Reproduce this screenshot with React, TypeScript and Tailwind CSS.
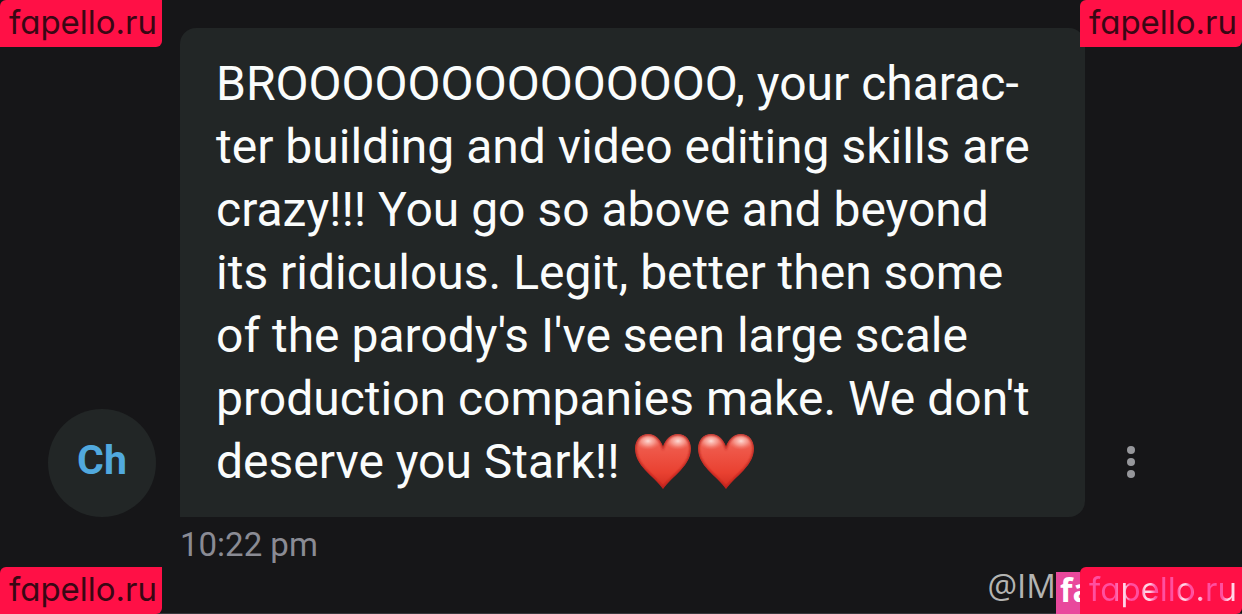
import React from 'react';

const Tag: React.FC<{ className?: string; textClass?: string }> = ({ className = '', textClass = 'text-[#3a0714]' }) => (
  <div
    className={`absolute flex h-[47px] w-[162px] items-center justify-center rounded-tl-md rounded-br-md bg-[#ff1046] pb-1 pl-1 font-['Inter'] text-[33px] leading-10 font-normal [font-feature-settings:'cv11'] ${className}`}
  >
    <span className={textClass}>fapello.ru</span>
  </div>
);

const heartPath =
  'M32 13.5C29.5 6 24 1 17.5 1 9.500 1 4 7 4 15.500 4 23 7.500 30 14 37 20 43.500 27 49 32 56 37 49 44 43.500 50 37 56.500 30 60 23 60 15.500 60 7 54.500 1 46.500 1 40 1 34.500 6 32 13.500Z';

const Heart: React.FC<{ id: string }> = ({ id }) => (
  <svg viewBox="0 0 63 57" className="inline-block h-[57px] w-[63px] align-[-12px]" role="img" aria-label="Red heart">
    <defs>
      <linearGradient id={`${id}-body`} x1="0" y1="0" x2="0" y2="1">
        <stop offset="0" stopColor="#ee6a5e" />
        <stop offset="0.35" stopColor="#ee5445" />
        <stop offset="0.7" stopColor="#e94131" />
        <stop offset="1" stopColor="#d02c20" />
      </linearGradient>
      <radialGradient id={`${id}-shine`}>
        <stop offset="0" stopColor="#ffe9e4" stopOpacity="0.9" />
        <stop offset="0.5" stopColor="#ffc9c0" stopOpacity="0.5" />
        <stop offset="1" stopColor="#f58a7e" stopOpacity="0" />
      </radialGradient>
      <clipPath id={`${id}-clip`}>
        <path d={heartPath} />
      </clipPath>
      <filter id={`${id}-soft`}>
        <feGaussianBlur stdDeviation="1.2" />
      </filter>
    </defs>
    <g clipPath={`url(#${id}-clip)`}>
      <path d={heartPath} fill={`url(#${id}-body)`} />
      <ellipse cx="17" cy="8" rx="13" ry="9" fill={`url(#${id}-shine)`} />
      <ellipse cx="47" cy="8" rx="13" ry="9" fill={`url(#${id}-shine)`} />
      <path d={heartPath} fill="none" stroke="#b5201a" strokeWidth="2.5" filter={`url(#${id}-soft)`} />
    </g>
  </svg>
);

const Avatar: React.FC<{ initials: string }> = ({ initials }) => (
  <div className="mr-6 flex size-[108px] shrink-0 items-center justify-center rounded-full bg-[#222626] pb-1 text-[41px] font-bold text-[#51a9de]">
    {initials}
  </div>
);

const MenuButton: React.FC = () => (
  <button type="button" aria-label="Message options" className="flex h-[110px] w-[92px] shrink-0 items-center justify-center">
    <svg viewBox="0 0 8 32" className="h-8 w-2 fill-[#96979b]">
      <circle cx="4" cy="4" r="4" />
      <circle cx="4" cy="16" r="4" />
      <circle cx="4" cy="28" r="4" />
    </svg>
  </button>
);

export default function App() {
  return (
    <div className="relative flex min-h-screen flex-col overflow-hidden bg-[#161618] pt-7 font-['Roboto',sans-serif] shadow-[inset_0_-1px_0_#37373c]">
      <main className="flex items-end pr-[65px] pl-12">
        <Avatar initials="Ch" />
        <p className="min-w-0 flex-1 rounded-2xl rounded-bl-none bg-[#222626] px-9 py-6 text-[48px] leading-[63px] text-[#fafcfc]">
          BROOOOOOOOOOOOOO, your charac&shy;ter building and video editing skills are crazy!!! You go so above and beyond its
          ridiculous. Legit, better then some of the parody's I've seen large scale production companies make. We don't
          deserve you Stark!!{' '}
          <span className="whitespace-nowrap">
            <Heart id="heart-a" />
            <Heart id="heart-b" />
          </span>
        </p>
        <MenuButton />
      </main>
      <time className="mt-2 pl-[180px] text-[33px] leading-10 text-[#8a8b94]">10:22 pm</time>

      <div className="absolute right-0 bottom-0 flex h-[42px] pr-[162px]">
        <span className="font-['Open_Sans'] text-[33px] leading-7 text-[#b4b4b2]">@IM</span>
        <span className="w-6 bg-[#e9489c] pl-1 font-['Open_Sans'] text-[32px] leading-9 font-bold text-white">fa</span>
      </div>

      <Tag className="top-0 left-0" />
      <Tag className="top-0 right-0" />
      <Tag className="bottom-0 left-0" />
      <Tag
        className="right-0 bottom-0"
        textClass="bg-[linear-gradient(90deg,#ff4fa0_0_18%,#ffd5e6_22%_24%,#ff4fa0_28%_34%,#ffd5e6_38%_41%,#ff4fa0_45%_60%,#ffd5e6_63%_65%,#ff4fa0_68%_70%,#ffd5e6_72%_74%,#ff4fa0_80%_90%,#ffd5e6_94%)] bg-clip-text text-transparent"
      />
    </div>
  );
}
